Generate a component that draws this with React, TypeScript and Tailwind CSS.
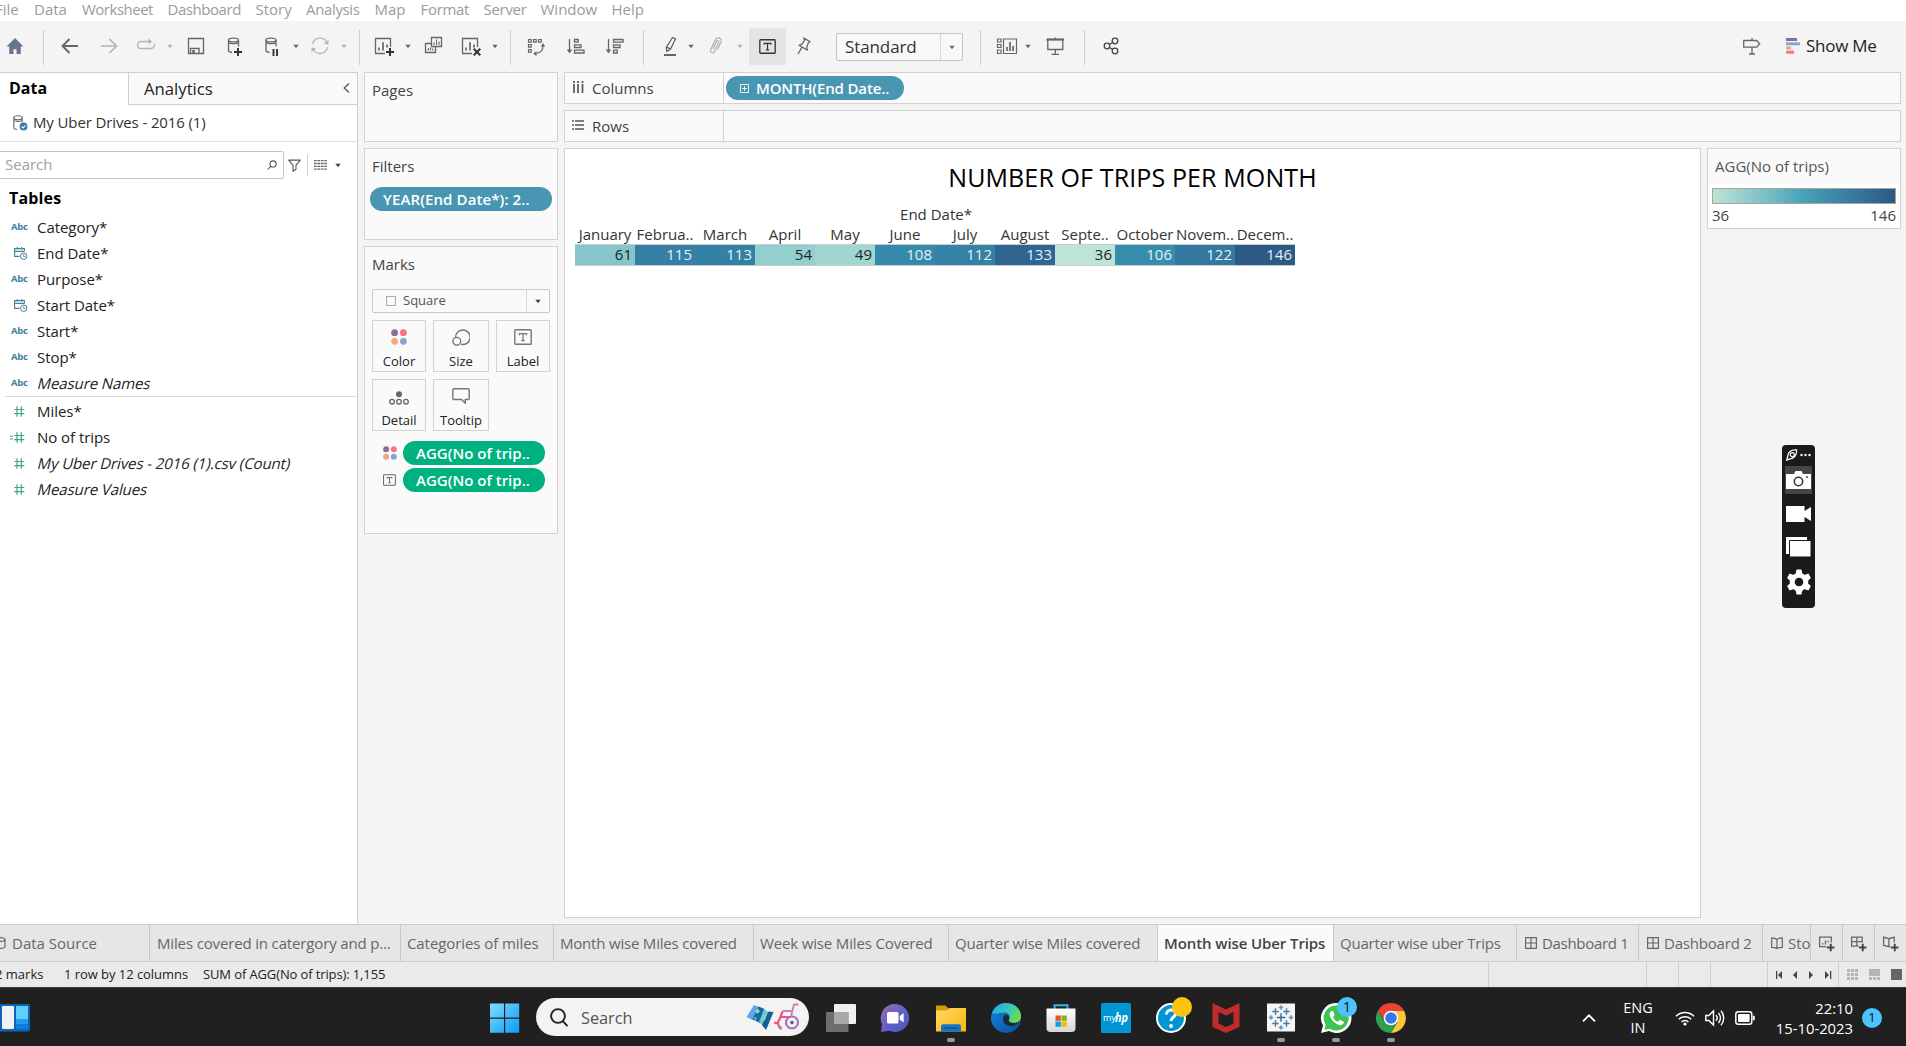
import React from "react";

type Kids = { children?: React.ReactNode; className?: string };

/* ---------- small shared pieces ---------- */

const Svg = ({ children, className = "" }: Kids) => (
  <svg viewBox="0 0 24 24" fill="none" stroke="#666" strokeWidth="1.3" className={"h-6 w-6 shrink-0 " + className}>
    {children}
  </svg>
);

const Caret = ({ className = "" }: { className?: string }) => (
  <svg viewBox="0 0 8 5" className={"h-[5px] w-2 shrink-0 " + className}>
    <path d="M1.300 0.800h5.400L4 4.300z" fill="currentColor" />
  </svg>
);

const Sep = ({ className = "" }: { className?: string }) => (
  <div className={"mt-[3px] h-[35px] w-px shrink-0 bg-[#cfcfcf] " + className} />
);

const LabelT = ({ className = "", color = "#666" }: { className?: string; color?: string }) => (
  <svg viewBox="0 0 18 16" fill="none" stroke={color} className={"shrink-0 " + className}>
    <rect x="0.8" y="0.8" width="16.4" height="14.4" rx="0.8" strokeWidth="1.4" />
    <path d="M5.500 6.200V4.600h7v1.600M9 4.600v7M7.300 11.600h3.400" strokeWidth="1.300" />
  </svg>
);

const ColorDots = ({ className = "" }: { className?: string }) => (
  <svg viewBox="0 0 16 16" className={"shrink-0 " + className}>
    <circle cx="3.600" cy="3.700" r="3.400" fill="#876f95" />
    <circle cx="12.400" cy="3.700" r="3.400" fill="#fc7180" />
    <circle cx="3.600" cy="12.300" r="3.400" fill="#f4a57a" />
    <circle cx="12.400" cy="12.300" r="3.400" fill="#82a6cc" />
  </svg>
);

const Cylinder = () => (
  <>
    <ellipse cx="10.500" cy="6" rx="5" ry="1.900" />
    <path d="M5.500 6v10.800c0 .8 1.200 1.400 3.500 1.700M15.500 6v6.500M5.500 8.500c1.500 1.500 8.500 1.500 10 0" />
  </>
);

const BarsSheet = () => (
  <>
    <path d="M13 19.500H3.500v-15h15V13" />
    <path d="M7 16.500v-3M11 16.500V8.300M15 13.500v-3" strokeWidth="1.700" />
  </>
);

/* ---------- menu and toolbar ---------- */

const menu: [string, string][] = [
  ["File", "w-[39px]"],
  ["Data", "w-[48px]"],
  ["Worksheet", "w-[85.500px] tracking-[-0.500px]"],
  ["Dashboard", "w-[88px] tracking-[-0.450px]"],
  ["Story", "w-[50.500px]"],
  ["Analysis", "w-[68.500px] tracking-[-0.350px]"],
  ["Map", "w-[46px]"],
  ["Format", "w-[63px] tracking-[-0.300px]"],
  ["Server", "w-[57px] tracking-[-0.300px]"],
  ["Window", "w-[71px]"],
  ["Help", "w-[40px]"],
];

const MenuBar = () => (
  <div className="-ml-[5px] flex h-[21px] items-center bg-white pb-[3px] text-[15px] text-[#9b9b9b]">
    {menu.map(([t, w]) => (
      <span key={t} className={"shrink-0 whitespace-nowrap " + w}>{t}</span>
    ))}
  </div>
);

const Toolbar = () => (
  <div className="flex h-[51px] items-center bg-[#f4f4f4] pb-px pl-[3px] text-[#666]">
    <Svg>
      <path d="M12 4L3.500 12.500h2.700V20h4.300v-4.800h3V20h4.300v-7.500h2.700z" fill="#687689" stroke="none" />
    </Svg>
    <Sep className="ml-4" />
    <Svg className="ml-[14px]"><path d="M20 12H4.800M11.500 5l-7 7 7 7" strokeWidth="1.900" /></Svg>
    <Svg className="ml-[15px]"><path d="M4 12h15.200M12.500 5l7 7-7 7" stroke="#b4b4b4" strokeWidth="1.700" /></Svg>
    <Svg className="ml-[13px]">
      <path d="M10.500 7.500H7a3.500 3.500 0 0 0 0 7h10a3.500 3.500 0 0 0 3.300-4.500M9.500 7.500H16" stroke="#b4b4b4" />
      <path d="M14.500 4.500L18 7.500l-3.500 3z" fill="#b4b4b4" stroke="none" />
    </Svg>
    <Caret className="ml-2 text-[#b4b4b4]" />
    <Svg className="ml-[10px]">
      <path d="M4.500 4.500h15v15h-15zM6.500 19.500v-5h8.500v5" />
      <path d="M9.500 16v3.500" strokeWidth="2.500" />
    </Svg>
    <Svg className="ml-[15px]">
      <Cylinder />
      <path d="M11 18h8M15 14v8" stroke="#333" strokeWidth="1.900" />
    </Svg>
    <Svg className="ml-[13px]">
      <g transform="translate(0.500,0)"><Cylinder /></g>
      <path d="M13.500 15v7M17 15v7" stroke="#333" strokeWidth="1.900" />
    </Svg>
    <Caret className="ml-2" />
    <Svg className="ml-2">
      <path d="M4.600 10A7.600 7.600 0 0 1 18.500 7.800M19.400 13A7.600 7.600 0 0 1 5.500 16" stroke="#b4b4b4" />
      <path d="M20.500 6v4.800l-4.500-1.300zM3.500 18v-4.800L8 14.500z" fill="#b4b4b4" stroke="none" />
    </Svg>
    <Caret className="ml-2 text-[#b4b4b4]" />
    <Sep className="ml-[11px]" />
    <Svg className="ml-3"><BarsSheet /><path d="M14 18h8M18 14v8" stroke="#333" strokeWidth="2" /></Svg>
    <Caret className="ml-2" />
    <Svg className="ml-[9px]">
      <path d="M10.500 3.500h10v9h-10zM10.500 9.500h-6v9h10v-6" />
      <path d="M13 11V8.500M15.500 11V5.500M18 11V7.500M7.300 16.500v-2.500M9.500 16.500v-3M11.700 16.500v-2" strokeWidth="1.100" />
    </Svg>
    <Svg className="ml-[15px]"><g transform="translate(-1,0)"><BarsSheet /></g><path d="M13.700 14.700l6.600 6.600M20.300 14.700l-6.600 6.600" stroke="#333" strokeWidth="2" /></Svg>
    <Caret className="ml-[7px]" />
    <Sep className="ml-[11px]" />
    <Svg className="ml-[13px]">
      <path d="M4.500 5.500h2.700v2.700H4.500zM9.500 5.500h2.700v2.700H9.500zM14.500 5.500h2.700v2.700h-2.700zM4.500 10.500h2.700v2.700H4.500zM4.500 15.500h2.700v2.700H4.500zM19 11.500c.3 4.500-2.500 7.800-7.500 8" strokeWidth="1.200" />
      <path d="M16.700 12.500L19 9l2.300 3.500zM12.500 17.300L9 19.700l3.500 2.300z" fill="#666" stroke="none" />
    </Svg>
    <Svg className="ml-4">
      <path d="M5.500 5v12M10.500 5.500h3.700v2.700h-3.700zM10.500 10.800h6.500v2.700h-6.500zM10.500 16.200h9.500v2.800h-9.500z" />
      <path d="M2.800 15.500h5.400L5.500 19.500z" fill="#666" stroke="none" />
    </Svg>
    <Svg className="ml-[15px]">
      <path d="M5.500 5v12M10.500 5.500h9.500v2.700h-9.500zM10.500 10.800h6.500v2.700h-6.500zM10.500 16.200h3.700v2.800h-3.700z" />
      <path d="M2.800 15.500h5.400L5.500 19.500z" fill="#666" stroke="none" />
    </Svg>
    <Sep className="ml-4" />
    <Svg className="ml-[14px]">
      <path d="M14.500 3.500l3 1.400-5 10.500-3.700 2-.5-4zM8.300 12.800l4 2" />
      <path d="M6 21h12" strokeWidth="2" />
    </Svg>
    <Caret className="ml-[5px]" />
    <Svg className="ml-[9px]">
      <path d="M9 15l3.500-7.500c.8-1.600 3-.6 2.300 1L10.500 17.500c-1.200 2.400-5 .8-3.900-1.700L11.500 5.600c1.700-3.400 7-1.200 5.500 2.300l-3.500 7.600" stroke="#b4b4b4" />
    </Svg>
    <Caret className="ml-2 text-[#b4b4b4]" />
    <div className="ml-[5px] mt-px flex h-[37px] w-[37px] shrink-0 items-center justify-center bg-[#e4e4e4]">
      <LabelT className="mb-px h-[15px] w-[17px]" color="#333" />
    </div>
    <Svg className="ml-[5px]">
      <path d="M12.800 4l6.200 3.600-1.600 1-1.600 4.300.5 3.200-8.300-4.800 3-1.100 2.700-3.800zM10.800 13.700L7 20" strokeLinejoin="round" />
    </Svg>
    <div className="ml-[21px] mt-[2px] flex h-7 w-[127px] shrink-0 items-center rounded-[2px] border border-[#c4c4c4] bg-[#f8f8f8]">
      <span className="w-[103px] pl-2 text-[17px] tracking-[-0.100px] text-[#333]">Standard</span>
      <div className="flex h-full flex-1 items-center justify-center border-l border-[#d8d8d8]"><Caret /></div>
    </div>
    <Sep className="ml-[17px]" />
    <Svg className="ml-[14px]">
      <path d="M2.500 5h3.500v3H2.500zM2.500 10.500h3.500v3H2.500zM2.500 16h3.500v3.500H2.500zM8.500 5h13v14.500h-13z" strokeWidth="1.200" />
      <path d="M12 17v-4M15 17V8M18 17v-5" strokeWidth="1.700" />
    </Svg>
    <Caret className="ml-[5px]" />
    <Svg className="ml-[11px]">
      <path d="M4.800 6v9.500h15V6M12.300 3.500V6M12.300 15.500v5M8.500 20.300h7.500" />
      <path d="M3.500 5.500h17.500" strokeWidth="2.200" />
    </Svg>
    <Sep className="ml-[17px]" />
    <Svg className="ml-[14px]">
      <circle cx="8" cy="12" r="2.800" stroke="#444" /><circle cx="16" cy="7" r="2.800" stroke="#444" /><circle cx="16" cy="17" r="2.800" stroke="#444" />
      <path d="M10.400 10.500l3.200-2M10.400 13.500l3.200 2" stroke="#444" />
    </Svg>
    <Svg className="ml-auto"><path d="M3.700 7.500h13l3 3.300-3 3.400h-13zM12 5v2.500M12 14.200V21M9 21h6" transform="translate(0,-1)" /></Svg>
    <svg viewBox="0 0 14 16" className="ml-[22px] h-4 w-[14px] shrink-0">
      <path d="M0 0h11v3H0z" fill="#876f95" /><path d="M0 4.300h14v3H0z" fill="#82a6cc" />
      <path d="M0 8.500h5v3H0z" fill="#f4a57a" /><path d="M0 12.700h8v3H0z" fill="#fc7180" />
    </svg>
    <span className="ml-[6px] w-[100px] text-[17px] tracking-[-0.250px] text-[#222]">Show Me</span>
  </div>
);

/* ---------- data pane ---------- */

const fields: { icon: string; name: string; italic?: boolean }[] = [
  { icon: "abc", name: "Category*" },
  { icon: "date", name: "End Date*" },
  { icon: "abc", name: "Purpose*" },
  { icon: "date", name: "Start Date*" },
  { icon: "abc", name: "Start*" },
  { icon: "abc", name: "Stop*" },
  { icon: "abc", name: "Measure Names", italic: true },
];
const measures: { icon: string; name: string; italic?: boolean }[] = [
  { icon: "num", name: "Miles*" },
  { icon: "calc", name: "No of trips" },
  { icon: "num", name: "My Uber Drives - 2016 (1).csv (Count)", italic: true },
  { icon: "num", name: "Measure Values", italic: true },
];

const FieldIcon = ({ kind }: { kind: string }) => {
  if (kind === "abc") return <span className="pl-[11px] text-[9.500px] font-bold tracking-[-0.300px] text-[#41809c]">Abc</span>;
  if (kind === "date")
    return (
      <svg viewBox="0 0 14 13" fill="none" stroke="#41809c" className="ml-[14px] h-[13px] w-[14px]">
        <path d="M5.500 9.400H.6V1.600h9.800V4.500M.6 4.400h9.800M3.300 0v2.500M7.700 0v2.500" strokeWidth="1.100" />
        <circle cx="9.700" cy="9.200" r="3.200" /><path d="M9.700 7.300v2.200h1.700" strokeWidth=".9" />
      </svg>
    );
  return (
    <svg viewBox="0 0 15 11" fill="none" stroke="#43a584" className="ml-[10px] h-[11px] w-[15px]">
      <path d="M7 .3v10.400M11.300 .3v10.400M4.300 3.500h10M4.300 7.700h10" strokeWidth="1.200" />
      {kind === "calc" && <path d="M0 4.200h3M0 7h3" />}
    </svg>
  );
};

const FieldRow = ({ f }: { f: { icon: string; name: string; italic?: boolean } }) => (
  <div className="flex h-[26px] items-center">
    <div className="flex w-[37px] shrink-0 items-center"><FieldIcon kind={f.icon} /></div>
    <span className={"inline-block whitespace-nowrap text-[15px] text-[#222] " + (f.italic ? "ml-px -skew-x-[14deg] tracking-[-0.100px]" : "tracking-[-0.050px]")}>{f.name}</span>
  </div>
);

const DataPane = () => (
  <div className="flex w-[358px] shrink-0 flex-col border-r border-t border-[#d0d0d0] bg-white">
    <div className="flex h-8">
      <div className="w-[128px] pl-[9px] text-[16px] font-bold leading-[30px] text-black">Data</div>
      <div className="flex flex-1 items-center border-b border-l border-[#d0d0d0] bg-[#fafafa] pl-[15px] pr-[7px]">
        <span className="pt-px text-[16.700px] text-[#222]">Analytics</span>
        <svg viewBox="0 0 7 10" className="ml-auto mb-[2px] h-[10px] w-[7px]" fill="none" stroke="#555" strokeWidth="1.300"><path d="M6 .5L1.200 5 6 9.500" /></svg>
      </div>
    </div>
    <div className="flex h-[37px] items-center border-b border-[#e0e0e0] pl-[13px]">
      <svg viewBox="0 0 15 16" className="h-4 w-[15px]" fill="none" stroke="#666" strokeWidth="1.100">
        <ellipse cx="5" cy="2.700" rx="4.200" ry="2" /><path d="M.8 2.700v10c0 .8 1 1.500 3.300 1.800M9.200 2.700V7M.8 5.500c1 1.200 7.400 1.200 8.400 0" />
        <circle cx="10.500" cy="11.500" r="3.900" fill="#2f7fa3" stroke="none" /><path d="M8.700 11.500l1.400 1.500 2.300-2.700" stroke="#fff" />
      </svg>
      <span className="mb-px ml-[5px] text-[15px] tracking-[-0.120px] text-[#333]">My Uber Drives - 2016 (1)</span>
    </div>
    <div className="mt-[9px] flex h-7 items-center">
      <div className="flex h-7 w-[284px] items-center rounded-r-[2px] border border-l-0 border-[#c4c4c4] pl-[5px]">
        <span className="mb-px text-[15px] text-[#a0a0a0]">Search</span>
        <svg viewBox="0 0 12 12" className="ml-auto mr-[6px] h-[10px] w-[10px]" fill="none" stroke="#555" strokeWidth="1.300"><circle cx="7.300" cy="4.700" r="3.700" /><path d="M4.700 7.300L.8 11.200" /></svg>
      </div>
      <svg viewBox="0 0 14 14" className="ml-1 h-[13px] w-[13px]" fill="none" stroke="#555" strokeWidth="1.200"><path d="M.8 1.200h12.400L8.600 6.800v4.200l-3.200 2.200V6.800z" strokeLinejoin="round" /></svg>
      <div className="ml-[6px] h-[22px] w-px bg-[#d0d0d0]" />
      <svg viewBox="0 0 13 10" className="ml-[6px] h-[10px] w-[13px]" stroke="#666" strokeWidth="1.300"><path d="M0 .7h13M0 3.500h13M0 6.300h13M0 9.100h13" strokeDasharray="2.700 .7" /></svg>
      <Caret className="ml-[7px] text-[#444]" />
    </div>
    <div className="mt-[6px] h-[29px] pl-[9px] text-[16px] font-bold leading-[26px] tracking-[0.150px] text-black">Tables</div>
    {fields.map((f) => <FieldRow key={f.name} f={f} />)}
    <div className="mb-px ml-[5px] h-px bg-[#d8d8d8]" />
    {measures.map((f) => <FieldRow key={f.name} f={f} />)}
  </div>
);

/* ---------- cards ---------- */

const Card = ({ children, className = "" }: Kids) => (
  <div className={"shrink-0 border border-[#d2d2d2] bg-[#fafafa] " + className}>{children}</div>
);

const MarkButton = ({ label, children, className = "" }: Kids & { label: string }) => (
  <div className={"flex h-[52px] flex-col items-center border border-[#d2d2d2] pt-2 " + className}>
    <div className="flex h-4 items-center justify-center">{children}</div>
    <span className="mt-2 text-[13px] leading-4 text-[#222]">{label}</span>
  </div>
);

const GreenPill = () => (
  <div className="flex h-6 w-[142px] items-center rounded-full bg-[#00b180] pl-[13px] text-[15px] font-semibold text-white">AGG(No of trip..</div>
);

const Shelves = () => (
  <div className="ml-[6px] flex w-[194px] shrink-0 flex-col gap-[6px]">
    <Card className="h-[70px] pl-[7px] pt-[6px] text-[15px] leading-[22px] text-[#444]">Pages</Card>
    <Card className="h-[92px] px-[5px] pt-[6px] text-[15px] leading-[22px] text-[#444]">
      <div className="pl-[2px]">Filters</div>
      <div className="mt-[10px] flex h-6 items-center whitespace-nowrap rounded-full bg-[#4996b2] pl-[13px] font-semibold tracking-[0.100px] text-white">YEAR(End Date*): 2..</div>
    </Card>
    <Card className="h-[288px] px-[7px] pt-[6px]">
      <div className="text-[15px] leading-[22px] text-[#444]">Marks</div>
      <div className="mt-[14px] flex h-6 w-[178px] items-center rounded-[2px] border border-[#c8c8c8]">
        <div className="ml-[13px] h-[10px] w-[10px] border border-[#aaa]" />
        <span className="ml-[7px] text-[13px] text-[#555]">Square</span>
        <div className="ml-auto flex h-full w-[23px] items-center justify-center border-l border-[#d8d8d8]"><Caret className="text-[#444]" /></div>
      </div>
      <div className="mt-[7px] grid grid-cols-[54px_56px_54px] gap-[7px]">
        <MarkButton label="Color"><ColorDots className="h-4 w-4" /></MarkButton>
        <MarkButton label="Size">
          <svg viewBox="0 0 18 17" className="h-[17px] w-[18px]" fill="none" stroke="#777" strokeWidth="1.400"><path d="M3.600 8.500A7.300 7.300 0 1 1 9 15.300" /><circle cx="4.800" cy="12.300" r="3.900" /></svg>
        </MarkButton>
        <MarkButton label="Label"><LabelT className="h-4 w-[18px]" color="#777" /></MarkButton>
        <MarkButton label="Detail">
          <svg viewBox="0 0 20 14" className="mt-[3px] h-[14px] w-5" fill="none" stroke="#666" strokeWidth="1.300"><circle cx="10" cy="3.200" r="3" fill="#666" stroke="none" /><circle cx="3" cy="10.700" r="2.300" /><circle cx="10" cy="10.700" r="2.300" /><circle cx="17" cy="10.700" r="2.300" /></svg>
        </MarkButton>
        <MarkButton label="Tooltip">
          <svg viewBox="0 0 18 16" className="h-4 w-[18px]" fill="none" stroke="#777" strokeWidth="1.400"><path d="M2 .8h14q1.200 0 1.200 1.200v8.300q0 1.200-1.200 1.200h-2.700v3.700l-3.700-3.700H2q-1.200 0-1.200-1.200V2Q.8.800 2 .8z" /></svg>
        </MarkButton>
      </div>
      <div className="mt-[10px] flex items-center gap-[6px] pl-[11px]"><ColorDots className="h-[14px] w-[14px]" /><GreenPill /></div>
      <div className="mt-[3px] flex items-center gap-[7px] pl-[11px]"><LabelT className="h-[12px] w-[13px]" /><GreenPill /></div>
    </Card>
  </div>
);

/* ---------- worksheet ---------- */

const months: [string, number, string][] = [
  ["January", 61, "bg-[#87c5cc] text-[#222]"],
  ["Februa..", 115, "bg-[#3580a4] text-[#e6eff3]"],
  ["March", 113, "bg-[#3382a5] text-[#e6eff3]"],
  ["April", 54, "bg-[#94cfcf] text-[#222]"],
  ["May", 49, "bg-[#9fd6d0] text-[#222]"],
  ["June", 108, "bg-[#358aab] text-[#e6eff3]"],
  ["July", 112, "bg-[#3483a6] text-[#e6eff3]"],
  ["August", 133, "bg-[#2f6691] text-[#e6eff3]"],
  ["Septe..", 36, "bg-[#bce4d8] text-[#222]"],
  ["October", 106, "bg-[#368dac] text-[#e6eff3]"],
  ["Novem..", 122, "bg-[#33789e] text-[#e6eff3]"],
  ["Decem..", 146, "bg-[#2c5985] text-[#e6eff3]"],
];

const Sheet = () => (
  <div className="h-[770px] w-[1137px] shrink-0 border border-[#d2d2d2] bg-white">
    <div className="mt-[9px] h-[38px] text-center text-[25px] leading-[38px] tracking-[0.120px] text-black">NUMBER OF TRIPS PER MONTH</div>
    <div className="ml-[10px] mt-2 w-[720px] text-[15px] text-[#333]">
      <div className="h-5 pl-[2px] text-center leading-5">End Date*</div>
      <div className="grid h-[21px] grid-cols-12 border-b border-[#ccc]">
        {months.map(([m]) => <span key={m} className="flex justify-center whitespace-nowrap leading-5">{m}</span>)}
      </div>
      <div className="grid h-[21px] grid-cols-12 border-b border-[#ccc]">
        {months.map(([m, v, c]) => <span key={m} className={"pr-[3px] text-right leading-[19px] " + c}>{v}</span>)}
      </div>
    </div>
  </div>
);

const Shelf = ({ label, icon, children }: Kids & { label: string; icon: React.ReactNode }) => (
  <div className="flex h-8 w-[1337px] shrink-0 items-stretch border border-[#d2d2d2] bg-[#fafafa]">
    <div className="flex w-[159px] items-center border-r border-[#d2d2d2] pl-[7px]">
      {icon}
      <span className="ml-2 text-[15px] text-[#444]">{label}</span>
    </div>
    <div className="flex items-center pl-[2px]">{children}</div>
  </div>
);

const Work = () => (
  <div className="ml-[6px] flex flex-col gap-[6px]">
    <Shelf label="Columns" icon={<svg viewBox="0 0 12 12" className="mb-[2px] h-3 w-3" stroke="#555" strokeWidth="1.700"><path d="M2 0v12M6 0v12M10.500 0v12" strokeDasharray="2 1 9 0" /></svg>}>
      <div className="flex h-6 w-[178px] items-center rounded-full bg-[#4996b2] pl-[14px] text-white">
        <svg viewBox="0 0 10 10" className="h-[9px] w-[9px]" fill="none" stroke="#fff"><path d="M.5.500h9v9h-9zM5 2.500v5M2.500 5h5" /></svg>
        <span className="ml-[7px] whitespace-nowrap text-[15px] font-semibold tracking-[-0.150px]">MONTH(End Date..</span>
      </div>
    </Shelf>
    <Shelf label="Rows" icon={<svg viewBox="0 0 12 12" className="mb-[2px] h-3 w-3" stroke="#555" strokeWidth="1.700"><path d="M0 2h12M0 6h12M0 10h12" strokeDasharray="2 1 9 0" /></svg>} />
    <div className="flex gap-[6px]">
      <Sheet />
      <div className="h-[81px] w-[194px] border border-[#d2d2d2] bg-white">
        <div className="h-[35px] bg-[#fafafa] pl-[7px] text-[15px] leading-[34px] text-[#555]">AGG(No of trips)</div>
        <div className="mx-1 mt-1 h-4 border border-[#aaa598] bg-linear-to-r from-[#bce4d8] via-[#45a2b9] to-[#2c5985]" />
        <div className="mx-1 flex justify-between text-[15px] leading-[23px] text-[#444]"><span>36</span><span>146</span></div>
      </div>
    </div>
  </div>
);

/* ---------- sheet tabs and status bar ---------- */

const GridIcon = () => (
  <svg viewBox="0 0 12 12" className="mr-[5px] h-3 w-3 shrink-0" fill="none" stroke="#666" strokeWidth="1.200"><path d="M.6.600h10.800v10.800H.6zM6 .6v10.800M.6 6h10.800" /></svg>
);
const BookIcon = () => (
  <svg viewBox="0 0 12 12" className="mr-[5px] h-3 w-3 shrink-0" fill="none" stroke="#666" strokeWidth="1.200"><path d="M6 2.500Q3.500.6.700.8v9.500q3 0 5.300 1.300 2.300-1.300 5.300-1.300V.8Q8.500.6 6 2.500zM6 2.500v9" /></svg>
);

const tabs: { t: string; w: string; icon?: React.ReactNode; active?: boolean }[] = [
  { t: "Miles covered in catergory and p...", w: "w-[251px] pl-[7px] tracking-[-0.150px]" },
  { t: "Categories of miles", w: "w-[153px] pl-[6px] tracking-[-0.080px]" },
  { t: "Month wise Miles covered", w: "w-[200px] pl-[6px] tracking-[-0.200px]" },
  { t: "Week wise Miles Covered", w: "w-[195px] pl-[6px] tracking-[-0.150px]" },
  { t: "Quarter wise Miles covered", w: "w-[209px] pl-[6px] tracking-[-0.200px]" },
  { t: "Month wise Uber Trips", w: "w-[176px] pl-[6px] tracking-[-0.100px]", active: true },
  { t: "Quarter wise uber Trips", w: "w-[183px] pl-[6px] tracking-[-0.200px]" },
  { t: "Dashboard 1", w: "w-[122px] pl-[8px] tracking-[-0.300px]", icon: <GridIcon /> },
  { t: "Dashboard 2", w: "w-[124px] pl-[8px] tracking-[-0.200px]", icon: <GridIcon /> },
  { t: "Sto", w: "w-[48px] pl-[8px]", icon: <BookIcon /> },
];

const NewTab = ({ d }: { d: string }) => (
  <div className="flex w-8 shrink-0 items-center justify-center border-r border-[#c8c8c8]">
    <svg viewBox="0 0 16 16" className="h-[17px] w-[17px]" fill="none" stroke="#666" strokeWidth="1.200">
      <path d={d} /><path d="M8.500 11.700h7M12 8.200v7" stroke="#444" strokeWidth="1.800" />
    </svg>
  </div>
);

const Tabs = () => (
  <div className="flex h-[38px] shrink-0 overflow-hidden border-y border-[#cccccc] bg-[#e6e6e6] text-[15px] text-[#666]">
    <div className="flex w-[150px] shrink-0 items-center border-r border-[#c8c8c8]">
      <svg viewBox="0 0 12 12" className="-ml-[6px] mr-[6px] h-3 w-3" fill="none" stroke="#666" strokeWidth="1.200"><ellipse cx="6" cy="2.500" rx="5" ry="1.900" /><path d="M1 2.500v7c0 2.500 10 2.500 10 0v-7" /></svg>
      <span>Data Source</span>
    </div>
    {tabs.map((x) => (
      <div key={x.t} className={"flex shrink-0 items-center overflow-hidden whitespace-nowrap border-r border-[#c8c8c8] " + x.w + (x.active ? " bg-[#fafafa] font-semibold text-[#444]" : "")}>
        {x.icon}{x.t}
      </div>
    ))}
    <NewTab d="M8 11H1.500V2h11v5M4.500 9V7.500M7 9V5M9.500 7V5.500" />
    <NewTab d="M8 10.500H1.500V2h10v5M6.500 2v8.500M1.500 6.200h10" />
    <NewTab d="M8 11.500l-1.500-.5-5-1.200V2l5 1.500 5-1.500v5M6.500 3.500V11" />
  </div>
);

const StatusBar = () => (
  <div className="flex h-[25px] shrink-0 bg-[#eaeaea] text-[13px] leading-[25px] text-[#222]">
    <span className="-ml-[5px] w-[69px] shrink-0">2 marks</span>
    <span className="w-[139px] shrink-0 tracking-[-0.050px]">1 row by 12 columns</span>
    <span className="shrink-0 tracking-[-0.120px]">SUM of AGG(No of trips): 1,155</span>
    <div className="ml-auto flex">
      <div className="w-[158px] border-l border-[#cfcfcf]" />
      <div className="w-8 border-l border-[#cfcfcf]" />
      <div className="w-8 border-l border-[#cfcfcf]" />
      <div className="w-[57px] border-l border-[#cfcfcf]" />
      <div className="flex w-[71px] items-center border-l border-[#cfcfcf] pl-2">
        <svg viewBox="0 0 56 8" className="h-2 w-14" fill="#444"><path d="M0 0h1.300v8H0zM6 0v8L2 4zM21 0v8l-4-4zM33 0v8l4-4zM49 0v8l4-4zM54 0h1.300v8H54z" /></svg>
      </div>
      <div className="flex w-[68px] items-center gap-[11px] border-l border-[#cfcfcf] pl-2">
        <svg viewBox="0 0 11 11" className="h-[11px] w-[11px] shrink-0" fill="#b4b4b4"><path d="M0 0h3v3H0zM4 0h3v3H4zM8 0h3v3H8zM0 4h3v3H0zM4 4h3v3H4zM8 4h3v3H8zM0 8h3v3H0zM4 8h3v3H4zM8 8h3v3H8z" /></svg>
        <svg viewBox="0 0 11 11" className="h-[11px] w-[11px] shrink-0" fill="#b4b4b4"><path d="M0 0h11v7H0zM0 8h3v3H0zM4 8h3v3H4zM8 8h3v3H8z" /></svg>
        <div className="h-[11px] w-[11px] shrink-0 bg-[#666]" />
      </div>
    </div>
  </div>
);

/* ---------- Windows taskbar ---------- */

const App32 = ({ children, className = "", running }: Kids & { running?: boolean }) => (
  <div className={"relative h-[59px] w-[30px] shrink-0 " + className}>
    <svg viewBox="0 0 30 30" className="mt-[15px] h-[30px] w-[30px] overflow-visible">{children}</svg>
    {running && <div className="mx-auto mt-[5px] h-1 w-2 rounded-full bg-[#9b9b9b]" />}
  </div>
);

const Cross = ({ x, y, s, c }: { x: number; y: number; s: number; c: string }) => (
  <path d={`M${x - s} ${y}h${2 * s}M${x} ${y - s}v${2 * s}`} stroke={c} strokeWidth="1.400" />
);

const Taskbar = () => (
  <div className="flex h-[59px] shrink-0 border-t border-[#3a3a3a] bg-[#202020] text-white">
    <App32>
      <defs>
        <linearGradient id="win" x1="0" y1="0" x2="1" y2="1"><stop offset="0" stopColor="#7fdcff" /><stop offset="1" stopColor="#0c9bf5" /></linearGradient>
        <linearGradient id="fold" x1="0" y1="0" x2="1" y2="1"><stop offset="0" stopColor="#ffd866" /><stop offset="1" stopColor="#f8b90f" /></linearGradient>
        <linearGradient id="edge" x1="0" y1="0" x2="1" y2="0.500"><stop offset="0" stopColor="#2aa6e0" /><stop offset="0.600" stopColor="#35c7c4" /><stop offset="1" stopColor="#6ade4b" /></linearGradient>
        <linearGradient id="edge2" x1="0" y1="0" x2="1" y2="1"><stop offset="0" stopColor="#0f8ae0" /><stop offset="1" stopColor="#0c4c94" /></linearGradient>
        <linearGradient id="chat" x1="0" y1="0" x2="1" y2="1"><stop offset="0" stopColor="#9a6bb0" /><stop offset="0.600" stopColor="#5b5fc7" /><stop offset="1" stopColor="#4a52c0" /></linearGradient>
        <linearGradient id="bag" x1="0" y1="0" x2="0" y2="1"><stop offset="0" stopColor="#fff" /><stop offset="1" stopColor="#d6d6d6" /></linearGradient>
      </defs>
      <rect x="-3" y="1" width="33" height="27.500" rx="2" fill="#0f62b4" />
      <rect x="2" y="3" width="12" height="23" rx="1" fill="#f2f2f2" />
      <path d="M16 3h12v13H16z" fill="#5fd2fb" /><path d="M16 16h12v5H16z" fill="#1f9cf0" /><path d="M16 21h12v5H16z" fill="#0a7ee0" />
    </App32>
    <App32 className="ml-[460px]">
      <path d="M0 .5h14v14H0zM15.200 .5h14v14h-14zM0 15.700h14v14H0zM15.200 15.700h14v14h-14z" fill="url(#win)" />
    </App32>
    <div className="ml-4 mt-[10px] flex h-[38px] w-[273px] shrink-0 items-center rounded-full bg-[#f3f3f3] pl-[14px] pr-[9px]">
      <svg viewBox="0 0 18 19" className="h-[19px] w-[18px]" fill="none" stroke="#222" strokeWidth="1.900"><circle cx="8" cy="8" r="6.900" /><path d="M12.800 13.200l4.700 5" /></svg>
      <span className="ml-[13px] pt-[2px] text-[16.300px] text-[#555]">Search</span>
      <svg viewBox="0 0 54 28" className="ml-auto h-7 w-[54px]" fill="none">
        <path d="M8 2l5.500 2.500-6 13-7-3.500z" fill="#5ba6ee" />
        <path d="M12.500 3.500l6 2.500-4 14.500-8-4.500z" fill="#1767a0" />
        <path d="M18 6l5 3.500-5 14-5-4.500z" fill="#6cc5e8" />
        <path d="M22.500 8.500l5 .5-7.500 18-4-5z" fill="#155d92" />
        <path d="M9 7.500l3-2 2 3-3 2.500zM8 14l3 1-2 2zM18 12l3-1-2 6-2.500 1z" fill="#8fdc9a" />
        <circle cx="46" cy="19.500" r="6" stroke="#a777bd" strokeWidth="2.200" /><circle cx="46" cy="19.500" r="1.800" fill="#704c9a" />
        <path d="M52.500 1.500H48L45 13.500M36.500 8h9" stroke="#c77fb8" strokeWidth="1.800" />
        <path d="M36.500 8.500l-2 5.500H45M34.500 14l-3 6.500M28 19.500l4 1 1.500 4" stroke="#f0528c" strokeWidth="2.200" />
        <circle cx="34.500" cy="25" r="1.800" fill="#b083c4" />
      </svg>
    </div>
    <App32 className="ml-[17px]">
      <rect x="8" y="1" width="22" height="20" rx="1" fill="#f0f0f0" />
      <rect x="0" y="9" width="22.500" height="20" rx="1" fill="#777" fillOpacity=".9" />
      <path d="M8 9h14.500v12H8z" fill="#a9a9a9" />
    </App32>
    <App32 className="ml-[25px]">
      <path d="M14.500 1a14 14 0 1 1-6 26.800L0 29l1-8A14 14 0 0 1 14.500 1z" fill="url(#chat)" />
      <rect x="6" y="9" width="11.500" height="11.500" rx="1.500" fill="#fff" /><path d="M18.700 13l4-3v9.500l-4-3z" fill="#fff" />
    </App32>
    <App32 className="ml-[25px]" running>
      <path d="M0 2.500h9.500l3 3V12H0z" fill="#dd9a00" />
      <path d="M0 7.500h11l2.500-2.500H30V28.500H0z" fill="url(#fold)" />
      <path d="M5 28.500v-5.200q0-2 2-2h16q2 0 2 2v5.200z" fill="#1674c4" /><path d="M8.500 25h13" stroke="#0b4f8f" strokeWidth="1.300" />
    </App32>
    <App32 className="ml-[25px]">
      <circle cx="15" cy="15" r="15" fill="url(#edge2)" />
      <path d="M1 10C4 2.500 10 0 15.500 0 24 0 30 6.500 30 13c0 5-3.500 7-7 7-4 0-6-1.500-5-3.500 2-3.500-.5-7-4.500-7C8 9.500 3 12 1 10z" fill="url(#edge)" />
      <path d="M18 16.500c-1 2 1 3.500 5 3.500 2 0 3.500-.5 5-1.500-1 2.500-4 4.500-8 4.500-4.500 0-8-3-8-7 0-2 1-3.500 2.500-4.500 3 .5 4.500 3 3.500 5z" fill="#1c2a38" />
    </App32>
    <App32 className="ml-[25px]">
      <path d="M8.500 7V2.200h13V7" fill="none" stroke="#35b5f0" strokeWidth="2" />
      <path d="M.5 5.500h29V25q0 4-4 4h-21q-4 0-4-4z" fill="url(#bag)" />
      <path d="M9.500 12.500h5.300v5.300H9.500z" fill="#f25022" /><path d="M15.500 12.500h5.300v5.300h-5.300z" fill="#7fba00" /><path d="M9.500 18.500h5.300v5.300H9.500z" fill="#00a4ef" /><path d="M15.500 18.500h5.300v5.300h-5.300z" fill="#ffb900" />
    </App32>
    <App32 className="ml-[25px]">
      <rect width="30" height="30" rx="1.500" fill="#0096d6" />
      <text x="2" y="17.500" fontSize="9" fill="#fff" fontFamily="Open Sans, sans-serif">my</text>
      <text x="14" y="18.500" fontSize="13" fontStyle="italic" fontWeight="700" fill="#fff" fontFamily="Open Sans, sans-serif" textLength="13" lengthAdjust="spacingAndGlyphs">hp</text>
    </App32>
    <App32 className="ml-[25px]">
      <circle cx="15" cy="15" r="14" fill="#0096d6" stroke="#fff" strokeWidth="2" />
      <path d="M10.500 11.500c0-6 9-6 9-.8 0 3.300-4.500 3.500-4.500 7.300" fill="none" stroke="#fff" strokeWidth="3" /><circle cx="15" cy="23" r="2" fill="#fff" />
      <circle cx="26" cy="4" r="10" fill="#ffc20e" />
    </App32>
    <App32 className="ml-[25px]">
      <path d="M1.500 0L15 6.500 28.500 0v24L15 30 1.500 24zM7.500 9v11.500L15 24l7.500-3.500V9L15 12.500z" fill="#c02c2c" fillRule="evenodd" />
    </App32>
    <App32 className="ml-[25px]" running>
      <path d="M1 .5h28v28H1z" fill="#f4f4f4" />
      <Cross x={15} y={14.500} s={4.200} c="#2c6ca0" />
      <Cross x={9.500} y={8.500} s={3.200} c="#3f7fb0" /><Cross x={20.500} y={8.500} s={3.200} c="#3f7fb0" />
      <Cross x={9.500} y={20.500} s={3.200} c="#3f7fb0" /><Cross x={20.500} y={20.500} s={3.200} c="#3f7fb0" />
      <Cross x={15} y={4.500} s={2.200} c="#5b93bd" /><Cross x={15} y={24.500} s={2.200} c="#5b93bd" />
      <Cross x={5} y={14.500} s={2.200} c="#5b93bd" /><Cross x={25} y={14.500} s={2.200} c="#5b93bd" />
    </App32>
    <App32 className="ml-[25px]" running>
      <path d="M15 0a15 15 0 1 1-7 28L0 30l2-7.500A15 15 0 0 1 15 0z" fill="#fff" />
      <path d="M15 2.500a12.500 12.500 0 1 1-6.300 23.200L3.500 26.800l1.200-5A12.500 12.500 0 0 1 15 2.500z" fill="#3fc351" />
      <path d="M10.500 8c-2 1.200-2.500 3.500-1.200 6 2 4 4.700 6.500 8.700 8 2.500.8 4.500-.5 5-3l-4-2.200-2 2c-2.500-1-4-2.500-5-4.800l1.700-2L12 8z" fill="#fff" />
      <circle cx="26" cy="4" r="10" fill="#4cc2ff" />
      <text x="26" y="9" fontSize="14" textAnchor="middle" fill="#111" fontFamily="Open Sans, sans-serif">1</text>
    </App32>
    <App32 className="ml-[25px]" running>
      <path d="M15 8h13.200A15 15 0 0 1 15 30l6.500-11z" fill="#fcc934" />
      <path d="M2 7.500A15 15 0 0 0 15 30l6.500-11.200L15 15 8.500 18.700z" fill="#2da14d" />
      <path d="M2.100 7.400A15 15 0 0 1 28.200 8H15L8.700 18.500z" fill="#ea4335" />
      <circle cx="15" cy="15" r="7.300" fill="#fff" /><circle cx="15" cy="15" r="5.800" fill="#3478ec" />
    </App32>
    <div className="ml-auto flex items-center pt-px">
      <svg viewBox="0 0 14 8" className="h-2 w-[14px]" fill="none" stroke="#fff" strokeWidth="1.800"><path d="M1 7.300l6-6 6 6" /></svg>
      <div className="ml-[27px] w-[30px] text-center text-[14.500px] leading-5">ENG<br />IN</div>
      <svg viewBox="0 0 20 16" className="ml-[22px] h-4 w-5" fill="none" stroke="#fff" strokeWidth="1.500"><path d="M1 6.200a12.700 12.700 0 0 1 18 0M3.800 9.200a8.800 8.800 0 0 1 12.400 0M6.600 12a4.800 4.800 0 0 1 6.800 0" /><circle cx="10" cy="14" r="1.600" fill="#fff" stroke="none" /></svg>
      <svg viewBox="0 0 20 18" className="ml-[10px] h-[18px] w-5" fill="none" stroke="#fff" strokeWidth="1.400"><path d="M.8 6.500h3L8.500 2v14L3.800 11.500h-3zM11 6.300a4 4 0 0 1 0 5.400M13.500 4a7.500 7.500 0 0 1 0 10M16 1.800a11 11 0 0 1 0 14.400" /></svg>
      <svg viewBox="0 0 20 14" className="ml-[10px] h-[14px] w-5" fill="none" stroke="#fff" strokeWidth="1.500"><rect x=".8" y=".8" width="16" height="12.400" rx="2.500" /><rect x="3" y="3" width="11.600" height="8" rx="1" fill="#fff" stroke="none" /><path d="M18.800 4.800v4.400" strokeWidth="1.900" /></svg>
      <div className="ml-[14px] w-[84px] text-right text-[14.800px] leading-5">22:10<br />15-10-2023</div>
      <div className="ml-[9px] mr-[24px] flex h-5 w-5 items-center justify-center rounded-full bg-[#4cc2ff] text-[13px] text-[#111]">1</div>
    </div>
  </div>
);

/* ---------- floating capture tool ---------- */

const CaptureTool = () => (
  <div className="absolute left-[1782px] top-[445px] flex h-[163px] w-[33px] flex-col items-center rounded-[4px] bg-[#1a1a1a]">
    <svg viewBox="0 0 25 12" className="mt-1 h-3 w-[25px]" fill="#fff">
      <path d="M10.500 1C6 .5 2.500 2.500 1.800 7L.8 11l3-1.200C8.500 9.500 11 6 10.500 1z" fill="none" stroke="#fff" strokeWidth="1.300" />
      <circle cx="6.300" cy="5.700" r="2" fill="none" stroke="#fff" strokeWidth="1.200" /><circle cx="15.500" cy="6" r="1.200" /><circle cx="19.500" cy="6" r="1.200" /><circle cx="23.500" cy="6" r="1.200" />
    </svg>
    <div className="mt-[5px] flex h-7 w-[27px] items-center justify-center bg-[#454545]">
      <svg viewBox="0 0 25 18" className="h-[18px] w-[25px]"><path d="M0 3h8l1.500-3h6L17 3h8v15H0z" fill="#fff" /><circle cx="12.500" cy="10.500" r="4.200" fill="none" stroke="#333" strokeWidth="1.500" /><circle cx="21" cy="6" r=".9" fill="#333" /></svg>
    </div>
    <svg viewBox="0 0 25 16" className="mt-3 h-4 w-[25px]" fill="#fff"><path d="M0 0h18.500v5L25 1v14l-6.500-4v5H0z" /></svg>
    <svg viewBox="0 0 25 20" className="mt-[15px] h-5 w-[25px]"><path d="M0 0h21v17H0z" fill="#fff" /><path d="M3.500 3.500H25V20H3.500z" fill="#fff" stroke="#1a1a1a" strokeWidth="1" /></svg>
    <svg viewBox="0 0 24 24" className="mt-3 h-[26px] w-[26px]" fill="#fff">
      <circle cx="12" cy="12" r="8.600" />
      <path d="M9.700.5h4.600l.9 4.500H8.800zM9.700 23.500h4.600l.9-4.500H8.800zM1 8.200l2.300-4L7.600 5.700 4.400 11.200zM23 8.200l-2.300-4-4.300 1.500 3.200 5.500zM1 15.800l2.300 4 4.300-1.500-3.200-5.500zM23 15.800l-2.300 4-4.300-1.500 3.200-5.500z" />
      <circle cx="12" cy="12" r="4" fill="#1a1a1a" />
    </svg>
  </div>
);

export default function App() {
  return (
    <div className="relative flex h-[1046px] w-[1906px] flex-col overflow-hidden bg-[#f4f4f4] font-['Open_Sans',sans-serif]">
      <MenuBar />
      <Toolbar />
      <div className="flex h-[852px] shrink-0">
        <DataPane />
        <Shelves />
        <Work />
      </div>
      <Tabs />
      <StatusBar />
      <Taskbar />
      <CaptureTool />
    </div>
  );
}
